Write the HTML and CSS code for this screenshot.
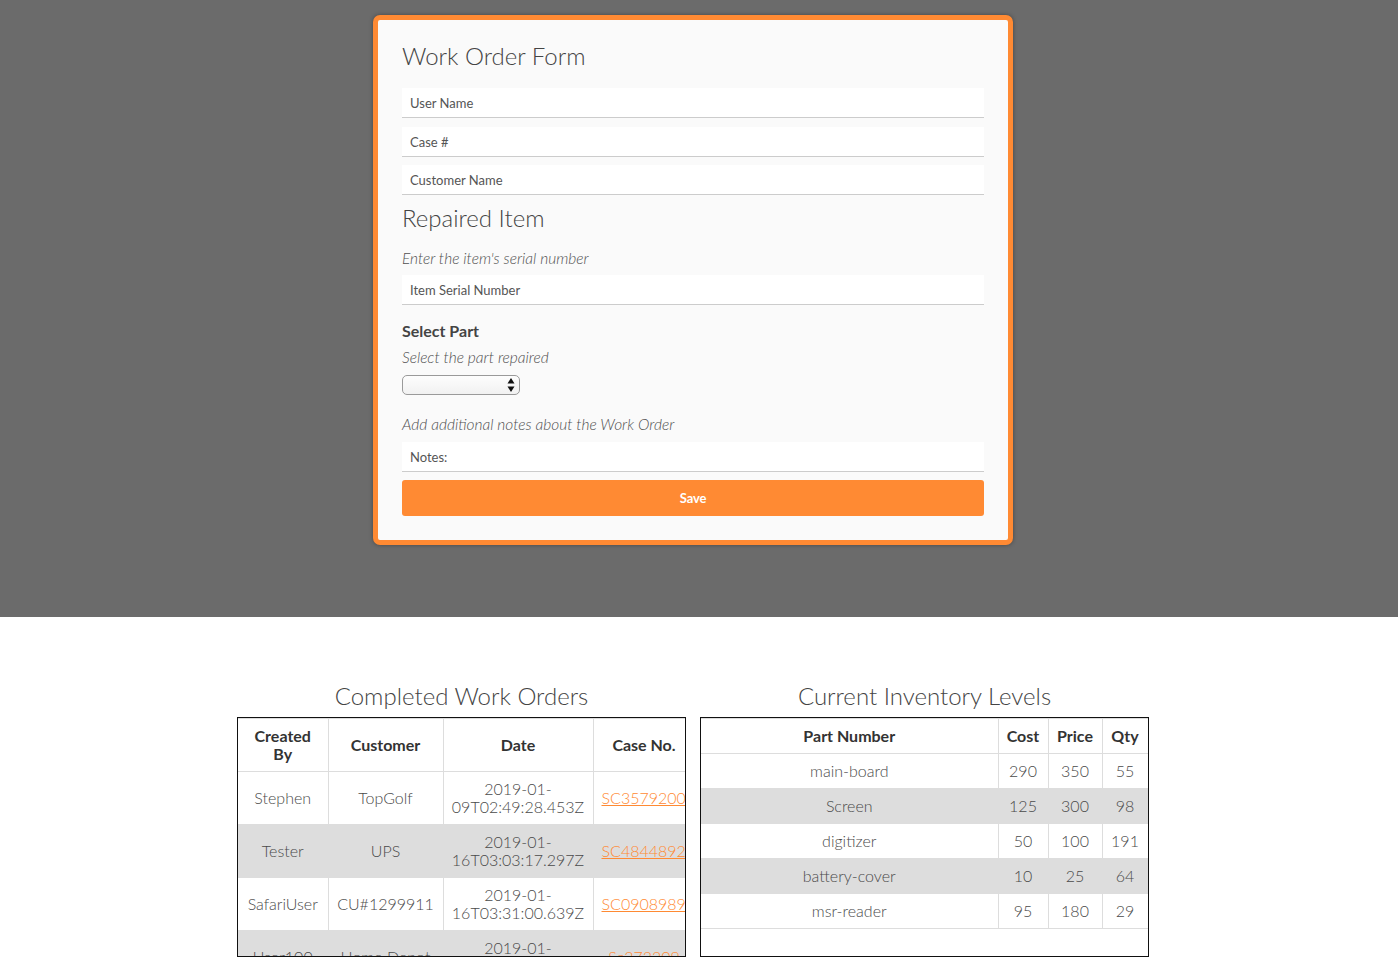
FILE: index.html
```html
<!DOCTYPE html>
<html>
<head>
<meta charset="utf-8">
<title>Work Order Form</title>
<link rel="stylesheet" href="styles.css">
</head>
<body>
<div class="page">
  <section class="top">
    <form class="card">
      <h1 class="title">Work Order Form</h1>
      <input class="field f-first" type="text" placeholder="User Name">
      <input class="field f-second" type="text" placeholder="Case #">
      <input class="field" type="text" placeholder="Customer Name">
      <h2 class="title sub">Repaired Item</h2>
      <p class="hint h-serial">Enter the item's serial number</p>
      <input class="field" type="text" placeholder="Item Serial Number">
      <h3 class="label">Select Part</h3>
      <p class="hint h-part">Select the part repaired</p>
      <div class="select-wrap">
        <select class="select"></select>
        <svg class="select-arrows" width="8" height="14" viewBox="0 0 8 14"><path d="M4 0 L7.5 5.5 L0.5 5.5 Z M4 14 L7.5 8.5 L0.5 8.5 Z" fill="#111"/></svg>
      </div>
      <p class="hint h-notes">Add additional notes about the Work Order</p>
      <input class="field" type="text" placeholder="Notes:">
      <button class="save" type="button">Save</button>
    </form>
  </section>
  <section class="bottom">
    <div class="panels">
      <div class="panel">
        <h2 class="panel-title">Completed Work Orders</h2>
        <div class="box">
          <table class="grid orders">
            <colgroup><col class="c1"><col class="c2"><col class="c3"><col class="c4"></colgroup>
            <thead>
              <tr><th>Created By</th><th>Customer</th><th>Date</th><th>Case No.</th></tr>
            </thead>
            <tbody>
              <tr><td>Stephen</td><td>TopGolf</td><td>2019-01-<wbr>09T02:49:28.453Z</td><td><a href="#">SC35792001834</a></td></tr>
              <tr><td>Tester</td><td>UPS</td><td>2019-01-<wbr>16T03:03:17.297Z</td><td><a href="#">SC48448920271</a></td></tr>
              <tr><td>SafariUser</td><td>CU#1299911</td><td>2019-01-<wbr>16T03:31:00.639Z</td><td><a href="#">SC09089891145</a></td></tr>
              <tr><td>User100</td><td>Home Depot</td><td>2019-01-<wbr>17T04:12:45.108Z</td><td><a href="#">Sc373209</a></td></tr>
              <tr><td>Stephen</td><td>TopGolf</td><td>2019-01-<wbr>18T05:20:11.902Z</td><td><a href="#">SC12093384</a></td></tr>
            </tbody>
          </table>
        </div>
      </div>
      <div class="panel">
        <h2 class="panel-title">Current Inventory Levels</h2>
        <div class="box">
          <table class="grid inventory">
            <colgroup><col class="p1"><col class="p2"><col class="p3"><col class="p4"></colgroup>
            <thead>
              <tr><th>Part Number</th><th>Cost</th><th>Price</th><th>Qty</th></tr>
            </thead>
            <tbody>
              <tr><td>main-board</td><td>290</td><td>350</td><td>55</td></tr>
              <tr><td>Screen</td><td>125</td><td>300</td><td>98</td></tr>
              <tr><td>digitizer</td><td>50</td><td>100</td><td>191</td></tr>
              <tr><td>battery-cover</td><td>10</td><td>25</td><td>64</td></tr>
              <tr><td>msr-reader</td><td>95</td><td>180</td><td>29</td></tr>
            </tbody>
          </table>
        </div>
      </div>
    </div>
  </section>
</div>
</body>
</html>
```
FILE: styles.css
```css
* { box-sizing: border-box; }
html, body { margin: 0; padding: 0; background: #fff; }
body {
  font-family: Lato, "Open Sans", "Liberation Sans", sans-serif;
  color: #444;
}
.page { width: 1398px; }

.top {
  background: #6b6b6b;
  height: 617px;
  padding: 15px 12px 0 0;
  display: flex;
  justify-content: center;
  align-items: flex-start;
}
.card {
  width: 640px;
  background: #fafafa;
  border: 5px solid #ff8a33;
  border-radius: 7px;
  box-shadow: 0 0 4px rgba(0,0,0,0.35);
  padding: 21px 24px 24px 24px;
  display: flex;
  flex-direction: column;
  margin: 0;
}
.title {
  margin: 0;
  font-size: 24px;
  line-height: 30px;
  font-weight: 300;
  color: #444;
}
.card > .title:first-child { margin-bottom: 17px; }
.sub { margin-top: 8px; margin-bottom: 15px; }
.field {
  display: block;
  width: 100%;
  height: 30px;
  border: none;
  border-bottom: 1px solid #cccccc;
  background: #ffffff;
  padding: 0 8px;
  font-family: Lato, "Open Sans", sans-serif;
  font-size: 13px;
  color: #333;
  outline: none;
  margin: 0;
}
.field::placeholder { color: #555; opacity: 1; }
.f-first { margin-bottom: 9px; }
.f-second { margin-bottom: 8px; }
.hint {
  margin: 0;
  font-size: 15.5px;
  line-height: 20px;
  font-style: italic;
  font-weight: 300;
  color: #505050;
}
.h-serial { margin-bottom: 7px; }
.label {
  margin: 16px 0 6px 0;
  font-size: 16px;
  line-height: 20px;
  font-weight: 700;
  color: #444;
}
.select-wrap {
  position: relative;
  width: 118px;
  height: 20px;
  margin-top: 8px;
}
.select {
  display: block;
  -webkit-appearance: none;
  appearance: none;
  width: 118px;
  height: 20px;
  border: 1px solid #9a9a9a;
  border-radius: 5px;
  background: linear-gradient(#fdfdfd, #f1f1f1);
  margin: 0;
  padding: 0;
}
.select-arrows {
  position: absolute;
  right: 5px;
  top: 3px;
  pointer-events: none;
}
.h-notes { margin-top: 19px; margin-bottom: 8px; }
.save {
  margin-top: 8px;
  width: 100%;
  height: 36px;
  border: none;
  border-radius: 3px;
  background: #ff8a33;
  color: #fff;
  font-family: Lato, "Open Sans", sans-serif;
  font-weight: 700;
  font-size: 13px;
  letter-spacing: -0.2px;
  padding: 0;
}

.bottom {
  background: #fff;
  padding: 64px 12px 0 0;
}
.panels {
  display: flex;
  justify-content: center;
  gap: 14px;
}
.panel {
  width: 449px;
  display: flex;
  flex-direction: column;
  align-items: stretch;
}
.panel-title {
  margin: 0 0 6px 0;
  text-align: center;
  font-size: 24px;
  line-height: 30px;
  font-weight: 300;
  color: #444;
}
.box {
  height: 240px;
  border: 1px solid #111;
  overflow: hidden;
}
.grid {
  border-collapse: collapse;
  table-layout: fixed;
  font-size: 16px;
  line-height: 18px;
}
.grid th, .grid td {
  border: 1px solid #dddddd;
  padding: 8px 8px;
  text-align: center;
  vertical-align: middle;
}
.grid th {
  font-weight: 700;
  color: #333;
}
.grid td {
  font-weight: 300;
  color: #4a4a4a;
}
.grid tbody tr:nth-child(even) td { background: #dddddd; }
.grid a { color: #ff8a33; text-decoration: underline; white-space: nowrap; }
.orders { width: 457px; }
.orders col.c1 { width: 90px; }
.orders col.c2 { width: 115px; }
.orders col.c3 { width: 150px; }
.orders col.c4 { width: 102px; }
.orders tr > :first-child, .inventory tr > :first-child { border-left: none; }
.inventory { width: 447px; }
.inventory col.p1 { width: 297px; }
.inventory col.p2 { width: 50px; }
.inventory col.p3 { width: 54px; }
.inventory col.p4 { width: 46px; }
```
